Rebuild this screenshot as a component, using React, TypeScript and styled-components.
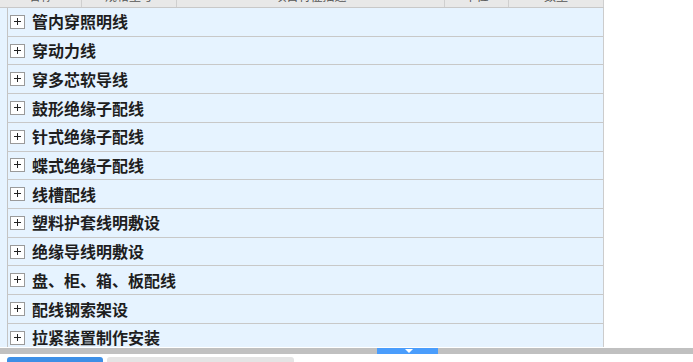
import styled, { createGlobalStyle } from 'styled-components';

const GlobalStyle = createGlobalStyle`
  html, body {
    margin: 0;
    padding: 0;
    background: #ffffff;
  }
  * {
    box-sizing: border-box;
  }
`;

const columns = [
  { title: '名称', width: 82 },
  { title: '规格型号', width: 95 },
  { title: '项目特征描述', width: 268 },
  { title: '单位', width: 64 },
  { title: '数量', width: 95 },
];

const groups = [
  '管内穿照明线',
  '穿动力线',
  '穿多芯软导线',
  '鼓形绝缘子配线',
  '针式绝缘子配线',
  '蝶式绝缘子配线',
  '线槽配线',
  '塑料护套线明敷设',
  '绝缘导线明敷设',
  '盘、柜、箱、板配线',
  '配线钢索架设',
  '拉紧装置制作安装',
];

export default function App() {
  return (
    <Page>
      <GlobalStyle />
      <Grid>
        <HeaderRow>
          {columns.map((c) => (
            <HeaderCell key={c.title} style={{ width: c.width }}>
              <span>{c.title}</span>
            </HeaderCell>
          ))}
        </HeaderRow>
        <Body>
          {groups.map((g) => (
            <GroupRow key={g}>
              <Expander aria-label="展开" />
              <GroupName>{g}</GroupName>
            </GroupRow>
          ))}
        </Body>
      </Grid>
      <ScrollBar>
        <Thumb>
          <Arrow />
        </Thumb>
      </ScrollBar>
      <Tabs>
        <Tab $active />
        <Tab />
      </Tabs>
    </Page>
  );
}

const Page = styled.div`
  width: 693px;
  height: 362px;
  overflow: hidden;
  background: #ffffff;
  font-family: "Noto Sans CJK SC", "Liberation Sans", sans-serif;
`;

const Grid = styled.div`
  width: 604px;
`;

const HeaderRow = styled.div`
  display: flex;
  height: 8px;
  background: #e8e8e8;
  border-bottom: 1px solid #c8c8c8;
  overflow: hidden;
`;

const HeaderCell = styled.div`
  height: 7px;
  overflow: hidden;
  display: flex;
  justify-content: center;
  border-right: 1px solid #cfcfcf;
  font-size: 12px;
  color: #555;

  > span {
    line-height: 14px;
    margin-top: -11px;
  }
`;

const Body = styled.div`
  height: 339px;
  overflow: hidden;
  background: #e6f3ff;
  border-right: 1px solid #cccccc;
`;

const GroupRow = styled.div`
  height: 28.73px;
  margin-left: 7px;
  border-left: 1px solid #c4c4c4;
  border-bottom: 1px solid #c8c8c8;
  display: flex;
  align-items: center;
  gap: 7px;
  padding-left: 2px;
`;

const Expander = styled.div`
  position: relative;
  flex: none;
  width: 15px;
  height: 14px;
  border: 1px solid #9a9a9a;
  background: #ffffff;

  &::before,
  &::after {
    content: '';
    position: absolute;
    background: #222;
  }
  &::before {
    left: 3px;
    top: 5px;
    width: 7px;
    height: 1px;
  }
  &::after {
    left: 6px;
    top: 2px;
    width: 1px;
    height: 7px;
  }
`;

const GroupName = styled.div`
  font-size: 16px;
  font-weight: 700;
  color: #1e1e1e;
  line-height: 1;
  margin-top: -1px;
`;

const ScrollBar = styled.div`
  margin-top: 1px;
  height: 6px;
  background: #c0c0c0;
  position: relative;
`;

const Thumb = styled.div`
  position: absolute;
  left: 377px;
  top: 0;
  width: 61px;
  height: 6px;
  background: #4a9dfc;
  display: flex;
  justify-content: center;
  align-items: center;
`;

const Arrow = styled.div`
  width: 0;
  height: 0;
  border-left: 4px solid transparent;
  border-right: 4px solid transparent;
  border-top: 4px solid #ffffff;
  margin-left: 2px;
`;

const Tabs = styled.div`
  display: flex;
  gap: 4px;
  padding-left: 7px;
  margin-top: 3px;
`;

const Tab = styled.div<{ $active?: boolean }>`
  width: ${({ $active }) => ($active ? '96px' : '187px')};
  height: 20px;
  border-radius: 3px 3px 0 0;
  background: ${({ $active }) => ($active ? '#3d8fe6' : '#e4e4e4')};
`;
